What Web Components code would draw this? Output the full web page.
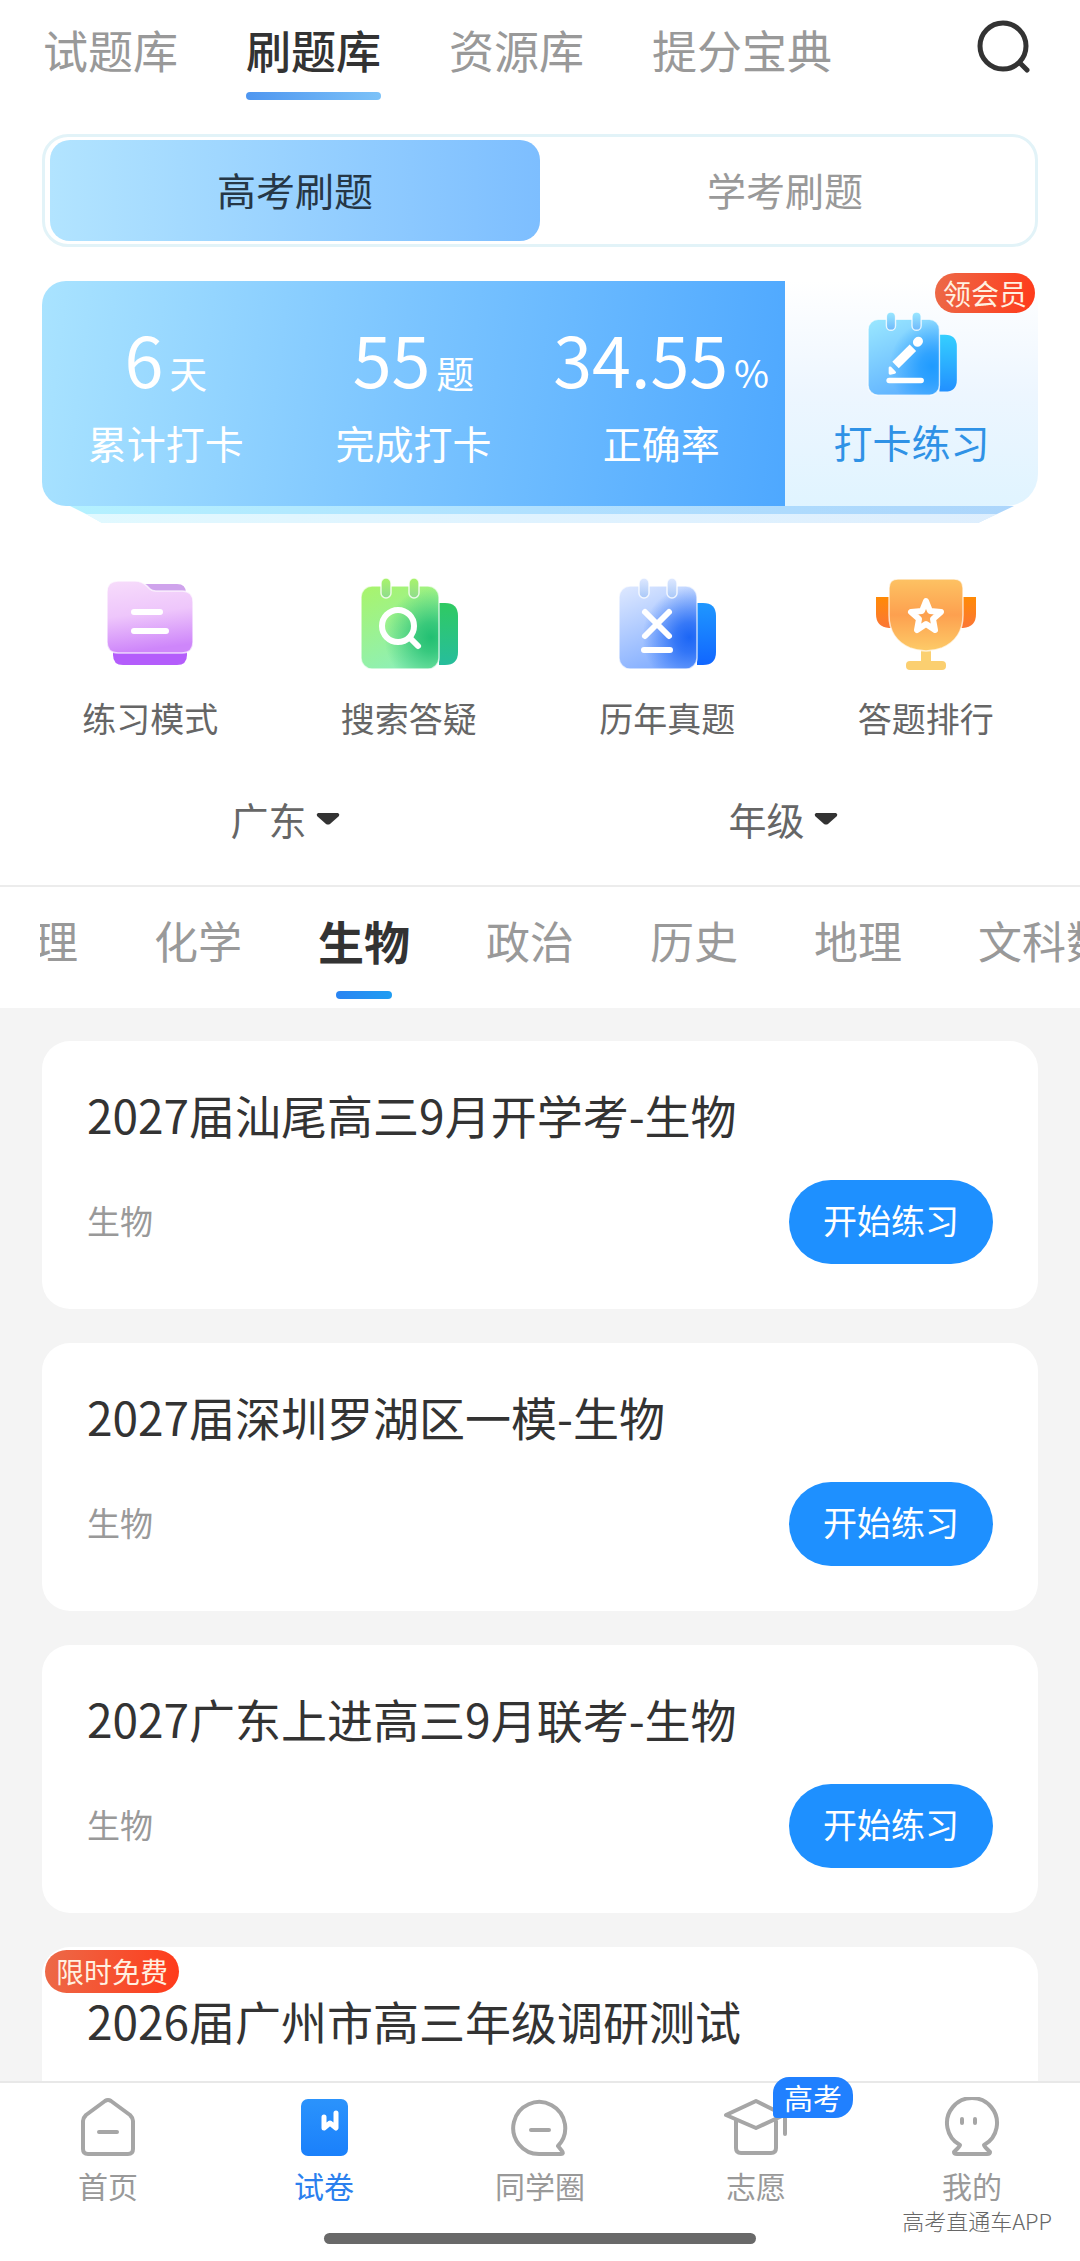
<!DOCTYPE html>
<html lang="zh-CN">
<head>
<meta charset="UTF-8">
<meta name="viewport" content="width=device-width, initial-scale=1.0">
<title>刷题库</title>
<style>
    body {
        margin: 0;
        font-family: "Noto Sans CJK SC", sans-serif;
        color: #333333;
        background-color: #ffffff;
    }
</style>
</head>
<body>
<practice-app></practice-app>

<script>
// Shared base: puts the markup of the element in an open shadow root
class BaseElement extends HTMLElement {
    constructor() {
        super();
        this.attachShadow({ mode: 'open' });
    }

    connectedCallback() {
        this.shadowRoot.innerHTML = `
        <style>
            * { box-sizing: border-box; }
            button, select {
                font-family: inherit;
                border: none;
                background: none;
                padding: 0;
                margin: 0;
                cursor: pointer;
            }
            a { color: inherit; text-decoration: none; }
            svg { display: block; }
        </style>
        ${this.render()}`;
    }
}

// Notepad shape used by several icons, the mark is drawn on top of it
function notepad(front, shade, side, ring, mark) {
    return `
    <svg viewBox="0 0 100 94" fill="none">
        <defs>
            <linearGradient id="front" x1="0" y1="0" x2="0.4" y2="1">
                <stop offset="0" stop-color="${front[0]}"/><stop offset="1" stop-color="${front[1]}"/>
            </linearGradient>
            <radialGradient id="shade" cx="0.9" cy="0.62" r="0.6">
                <stop offset="0" stop-color="${shade}"/><stop offset="0.3" stop-color="${shade}" stop-opacity="0.8"/>
                <stop offset="1" stop-color="${shade}" stop-opacity="0"/>
            </radialGradient>
            <linearGradient id="side" x1="0" y1="0" x2="0" y2="1">
                <stop offset="0" stop-color="${side[0]}"/><stop offset="1" stop-color="${side[1]}"/>
            </linearGradient>
            <linearGradient id="ring" x1="0" y1="0" x2="0" y2="1">
                <stop offset="0" stop-color="${front[0]}"/><stop offset="1" stop-color="${ring}"/>
            </linearGradient>
        </defs>
        <path d="M80 25h6q13 0 13 13v36q0 13-13 13h-6z" fill="url(#side)"/>
        <rect x="2" y="8" width="78" height="83" rx="11" fill="url(#front)"/>
        <rect x="2" y="8" width="78" height="83" rx="11" fill="url(#shade)" stroke="#ffffff" stroke-opacity="0.7" stroke-width="1.5"/>
        <rect x="22" y="0" width="10" height="20" rx="5" fill="url(#ring)" stroke="#ffffff" stroke-opacity="0.8" stroke-width="1.5"/>
        <rect x="50" y="0" width="10" height="20" rx="5" fill="url(#ring)" stroke="#ffffff" stroke-opacity="0.8" stroke-width="1.5"/>
        <g stroke="#ffffff" stroke-width="6" stroke-linecap="round">${mark}</g>
    </svg>`;
}

const icons = {
    search: `
    <svg viewBox="0 0 54 54" fill="none" stroke="#333333" stroke-width="5" stroke-linecap="round">
        <circle cx="27" cy="26" r="23"/><path d="M44 43l7 7"/>
    </svg>`,
    write: notepad(['#9be8ff', '#62b4ff'], '#1f9bff', ['#35cfff', '#2290ff'], '#6fb9fb', `
        <path d="M25 75h35"/>
        <path d="M32 58L51 39" stroke-width="10" stroke-linecap="butt"/>
        <path d="M26 67v-6l5 5z" stroke-width="3" stroke-linejoin="round" fill="#ffffff"/>
        <path d="M56 33l1-1" stroke-width="10"/>`),
    find: notepad(['#a9f46a', '#8ff0b4'], '#22bf72', ['#2fca62', '#27bd9c'], '#8fdc8e', `
        <circle cx="39" cy="48" r="16"/><path d="M52 61l7 7"/>`),
    past: notepad(['#dfe9ff', '#86b0ff'], '#1c66f5', ['#1f97ff', '#1166ff'], '#a9c8f8', `
        <path d="M28 34l24 24M52 34L28 58M27 72h26"/>`),
    folder: `
    <svg viewBox="0 0 100 94" fill="none">
        <defs>
            <linearGradient id="paper" x1="0" y1="0" x2="0.15" y2="1">
                <stop offset="0" stop-color="#f7dcfb"/><stop offset="0.5" stop-color="#eec6fb"/><stop offset="1" stop-color="#ce86fa"/>
            </linearGradient>
        </defs>
        <path d="M42 6h35q9 0 9 9H42z" fill="#cfa3ec"/>
        <path d="M13 74h74v3q0 10-10 10H23q-10 0-10-10z" fill="#b45dfb"/>
        <path d="M18 3h17q7 0 12 5l3 3q2 2 6 2h26q11 0 11 11v40q0 11-11 11H18Q7 75 7 64V14Q7 3 18 3z" fill="url(#paper)" stroke="#ffffff" stroke-opacity="0.7" stroke-width="1.5"/>
        <path d="M34 34h26M34 53h32" stroke="#ffffff" stroke-width="6" stroke-linecap="round"/>
    </svg>`,
    trophy: `
    <svg viewBox="0 0 100 94" fill="none">
        <defs>
            <linearGradient id="cup" x1="0" y1="0" x2="0" y2="1">
                <stop offset="0" stop-color="#fdc263"/><stop offset="0.5" stop-color="#fda04f"/><stop offset="1" stop-color="#fdcb68"/>
            </linearGradient>
            <linearGradient id="ear" x1="0" y1="0" x2="0" y2="1">
                <stop offset="0" stop-color="#ff8a05"/><stop offset="1" stop-color="#fb7637"/>
            </linearGradient>
        </defs>
        <path d="M0 19h16v31h-3Q0 49 0 36z" fill="url(#ear)"/>
        <path d="M100 19H84v31h3q13-1 13-14z" fill="url(#ear)"/>
        <path d="M45 70h10v14H45z" fill="#fbd070"/>
        <rect x="30" y="83" width="40" height="9" rx="4" fill="#fbcf70"/>
        <path d="M22 1h56q9 0 9 9v27q0 24-21 33-8 3-16 3t-16-3Q13 61 13 37V10q0-9 9-9z" fill="url(#cup)" stroke="#ffffff" stroke-opacity="0.7" stroke-width="1.5"/>
        <path d="M50 23l4 10 11 1-8 7 2 11-9-6-9 6 2-11-8-7 11-1z" stroke="#ffffff" stroke-width="6" stroke-linejoin="round"/>
    </svg>`,
    arrow: `
    <svg viewBox="0 0 24 12"><path d="M2 0h20q2 1 1 3l-9 8q-2 1-4 0L1 3Q0 1 2 0z" fill="#333333"/></svg>`,
    home: `
    <svg viewBox="0 0 60 60" fill="none" stroke="#a6a6a6" stroke-width="4" stroke-linecap="round" stroke-linejoin="round">
        <path d="M27 4q3-2 6 0l19 14q3 3 3 6v28q0 5-5 5H10q-5 0-5-5V24q0-3 3-6zM21 35h18"/>
    </svg>`,
    paper: `
    <svg viewBox="0 0 60 60" fill="none">
        <defs>
            <linearGradient id="book" x1="0" y1="0" x2="0" y2="1">
                <stop offset="0" stop-color="#2b93fc"/><stop offset="1" stop-color="#1a80fb"/>
            </linearGradient>
        </defs>
        <rect x="7" y="2" width="47" height="57" rx="7" fill="url(#book)"/>
        <path d="M30 20v11l6-5 6 5V16" stroke="#ffffff" stroke-width="5" stroke-linecap="round" stroke-linejoin="round"/>
    </svg>`,
    circle: `
    <svg viewBox="0 0 60 60" fill="none" stroke="#a6a6a6" stroke-width="4" stroke-linecap="round" stroke-linejoin="round">
        <path d="M30 57h21q3 0 1-3l-4-5a26 26 0 1 0-18 8zM21 33h18"/>
    </svg>`,
    cap: `
    <svg viewBox="0 0 66 60" fill="none" stroke="#a6a6a6" stroke-width="4" stroke-linecap="round" stroke-linejoin="round">
        <path d="M3 18L33 4l28 14-28 13zM13 24v27q0 5 5 5h30q5 0 5-5V24M62 19v18"/>
    </svg>`,
    me: `
    <svg viewBox="0 0 60 60" fill="none" stroke="#a6a6a6" stroke-width="4" stroke-linecap="round" stroke-linejoin="round">
        <path d="M18 48a25 25 0 1 1 24 0q0 1 3 4l3 3q0 2-3 2H15q-3 0-3-2l3-3q3-3 3-4zM20 22v4M33 22v4"/>
    </svg>`
};

class AppIcon extends BaseElement {
    render() {
        return `
        <style>
            :host { display: block; flex: none; }
            svg { width: 100%; height: 100%; }
        </style>
        ${icons[this.getAttribute('name')]}`;
    }
}

class TopTabs extends BaseElement {
    render() {
        return `
        <style>
            :host {
                display: flex;
                justify-content: space-between;
                align-items: flex-start;
                padding: 20px 50px 0 43px;
            }
            nav { display: flex; gap: 68px; }
            a {
                font-size: 45px;
                line-height: 60px;
                color: #999999;
            }
            a::after {
                content: "";
                display: block;
                height: 8px;
                margin-top: 12px;
                border-radius: 4px;
            }
            a.active { color: #333333; font-weight: 500; }
            a.active::after { background: linear-gradient(90deg, #4e96f0, #7cc2f8); }
            app-icon { width: 54px; height: 54px; }
        </style>
        <nav>
            <a href="#papers">试题库</a>
            <a href="#practice" class="active">刷题库</a>
            <a href="#resources">资源库</a>
            <a href="#tips">提分宝典</a>
        </nav>
        <button aria-label="搜索"><app-icon name="search"></app-icon></button>`;
    }
}

class ModeSwitch extends BaseElement {
    render() {
        return `
        <style>
            :host {
                display: grid;
                grid-template-columns: 1fr 1fr;
                padding: 3px 5px;
                border: 3px solid #e2f3f8;
                border-radius: 26px;
            }
            button {
                height: 101px;
                padding-bottom: 4px;
                font-size: 39px;
                line-height: 50px;
                color: #999999;
                border-radius: 20px;
            }
            button.active {
                color: #263746;
                background: linear-gradient(90deg, #b2e4ff, #7dbeff);
            }
        </style>
        <button class="active">高考刷题</button>
        <button>学考刷题</button>`;
    }

    connectedCallback() {
        super.connectedCallback();
        const buttons = this.shadowRoot.querySelectorAll('button');
        buttons.forEach(button => {
            button.addEventListener('click', () => {
                buttons.forEach(b => b.classList.toggle('active', b === button));
            });
        });
    }
}

class StatItem extends BaseElement {
    render() {
        return `
        <style>
            :host {
                display: flex;
                flex-direction: column;
                align-items: center;
                color: #ffffff;
            }
            .value {
                display: flex;
                align-items: baseline;
                gap: 6px;
                font-size: 70px;
                line-height: 90px;
            }
            .unit { font-size: 38px; line-height: 50px; }
            .label { font-size: 39px; line-height: 50px; margin-top: 14px; }
        </style>
        <div class="value"><slot></slot><span class="unit">${this.getAttribute('unit')}</span></div>
        <div class="label">${this.getAttribute('label')}</div>`;
    }
}

class TagBadge extends BaseElement {
    render() {
        return `
        <style>
            :host {
                display: block;
                padding: 0 8px;
                font-size: 28px;
                line-height: 40px;
                color: #fff0e0;
                background: linear-gradient(100deg, #ec6a48, #ff3a1a);
                border-radius: 22px;
            }
            :host([large]) { padding: 0 11px; line-height: 43px; }
        </style>
        <slot></slot>`;
    }
}

class CheckInPanel extends BaseElement {
    render() {
        return `
        <style>
            :host { display: block; }
            .panel { display: grid; grid-template-columns: 743fr 253fr; height: 225px; }
            .stats {
                display: grid;
                grid-template-columns: repeat(3, 1fr);
                padding-top: 32px;
                background: linear-gradient(97deg, #a9e3ff, #7cc5ff 48%, #4ea8ff);
                border-radius: 24px 0 0 24px;
            }
            .start {
                position: relative;
                display: flex;
                flex-direction: column;
                align-items: center;
                padding-top: 31px;
                font-size: 39px;
                line-height: 50px;
                color: #2f92e6;
                background: linear-gradient(#ffffff, #edf6ff 50%, #e0f4ff);
                border-radius: 0 24px 32px 0;
            }
            .start app-icon { width: 92px; height: 86px; margin-bottom: 18px; }
            tag-badge { position: absolute; top: -8px; right: 3px; }
            .layers {
                height: 17px;
                background:
                    linear-gradient(transparent 8px, rgba(255, 255, 255, 0.6) 8px),
                    linear-gradient(90deg, #b4f2ff, #b0e0ff 50%, #acd5fb);
                clip-path: polygon(28px 0, calc(100% - 24px) 0, calc(100% - 60px) 100%, 60px 100%, 44px 8px);
            }
        </style>
        <div class="panel">
            <div class="stats">
                <stat-item unit="天" label="累计打卡">6</stat-item>
                <stat-item unit="题" label="完成打卡">55</stat-item>
                <stat-item unit="%" label="正确率">34.55</stat-item>
            </div>
            <a class="start" href="#check-in">
                <app-icon name="write"></app-icon>
                打卡练习
                <tag-badge>领会员</tag-badge>
            </a>
        </div>
        <div class="layers"></div>`;
    }
}

class QuickEntry extends BaseElement {
    render() {
        return `
        <style>
            :host { display: block; }
            a {
                display: flex;
                flex-direction: column;
                align-items: center;
                gap: 26px;
                font-size: 34px;
                line-height: 40px;
                color: #666666;
            }
            app-icon { width: 100px; height: 94px; }
        </style>
        <a href="#${this.getAttribute('icon')}">
            <app-icon name="${this.getAttribute('icon')}"></app-icon>
            <slot></slot>
        </a>`;
    }
}

class FilterSelect extends BaseElement {
    render() {
        return `
        <style>
            :host { display: flex; justify-content: center; }
            label { display: flex; align-items: center; gap: 8px; padding-right: 12px; }
            select {
                appearance: none;
                height: 50px;
                font-size: 38px;
                line-height: 50px;
                color: #666666;
            }
            app-icon { width: 24px; height: 12px; }
        </style>
        <label>
            <select aria-label="${this.getAttribute('label')}"><option>${this.getAttribute('value')}</option></select>
            <app-icon name="arrow"></app-icon>
        </label>`;
    }
}

class SubjectTabs extends BaseElement {
    render() {
        const subjects = ['物理', '化学', '生物', '政治', '历史', '地理', '文科数学'];
        return `
        <style>
            :host {
                display: block;
                padding-left: 40px;
                border-top: 2px solid #ececec;
            }
            nav {
                display: flex;
                gap: 76px;
                padding: 23px 0 9px;
                overflow: hidden;
            }
            a {
                flex: none;
                font-size: 44px;
                line-height: 60px;
                color: #999999;
                padding-bottom: 29px;
            }
            a.active {
                font-size: 46px;
                font-weight: bold;
                color: #333333;
                position: relative;
            }
            a.active::after {
                content: "";
                position: absolute;
                left: 18px;
                right: 18px;
                bottom: 0;
                height: 8px;
                border-radius: 4px;
                background: linear-gradient(90deg, #2a84f2, #1f9df2);
            }
        </style>
        <nav>
            ${subjects.map(name => `<a href="#${name}"${name === '生物' ? ' class="active"' : ''}>${name}</a>`).join('')}
        </nav>`;
    }

    connectedCallback() {
        super.connectedCallback();
        this.shadowRoot.querySelector('nav').scrollLeft = 50;
    }
}

class PaperCard extends BaseElement {
    render() {
        const tag = this.getAttribute('tag');
        const subject = this.getAttribute('subject');
        return `
        <style>
            :host {
                display: block;
                position: relative;
                padding: 43px 45px 45px;
                background-color: #ffffff;
                border-radius: 28px;
            }
            h2 { margin: 0 0 36px; font-size: 46px; line-height: 60px; font-weight: normal; }
            .row { display: flex; justify-content: space-between; align-items: center; }
            .subject { padding-bottom: 4px; font-size: 33px; line-height: 40px; color: #999999; }
            button {
                height: 84px;
                padding: 0 34px 4px;
                font-size: 34px;
                line-height: 40px;
                color: #ffffff;
                background-color: #1e90ff;
                border-radius: 42px;
            }
            tag-badge { position: absolute; top: 3px; left: 3px; }
        </style>
        ${tag ? `<tag-badge large>${tag}</tag-badge>` : ''}
        <h2><slot></slot></h2>
        ${subject ? `
        <div class="row">
            <span class="subject">${subject}</span>
            <button>开始练习</button>
        </div>` : ''}`;
    }
}

class NavItem extends BaseElement {
    render() {
        const badge = this.getAttribute('badge');
        return `
        <style>
            :host { display: block; color: #999999; }
            :host([active]) { color: #2b80ee; }
            a {
                position: relative;
                display: flex;
                flex-direction: column;
                align-items: center;
                gap: 8px;
                font-size: 30px;
                line-height: 40px;
            }
            app-icon { width: 60px; height: 60px; }
            app-icon[name="cap"] { width: 66px; }
            .badge {
                position: absolute;
                top: -20px;
                left: calc(50% + 17px);
                padding: 0 11px;
                font-size: 29px;
                line-height: 41px;
                color: #ffffff;
                background-color: #2080ff;
                border-radius: 16px 18px 18px 4px;
            }
        </style>
        <a href="#${this.getAttribute('icon')}">
            <app-icon name="${this.getAttribute('icon')}"></app-icon>
            <slot></slot>
            ${badge ? `<span class="badge">${badge}</span>` : ''}
        </a>`;
    }
}

class BottomNav extends BaseElement {
    render() {
        return `
        <style>
            :host {
                display: block;
                position: relative;
                background-color: #ffffff;
                border-top: 2px solid #e8e8e8;
                padding-bottom: 17px;
            }
            nav {
                display: grid;
                grid-template-columns: repeat(5, 1fr);
                padding: 14px 0 28px;
            }
            .handle {
                width: 40%;
                height: 11px;
                margin: 0 auto;
                background-color: #696969;
                border-radius: 6px;
            }
            .mark {
                position: absolute;
                right: 28px;
                bottom: 26px;
                font-size: 22px;
                line-height: 30px;
                font-weight: 300;
                color: #666666;
            }
        </style>
        <nav>
            <nav-item icon="home">首页</nav-item>
            <nav-item icon="paper" active>试卷</nav-item>
            <nav-item icon="circle">同学圈</nav-item>
            <nav-item icon="cap" badge="高考">志愿</nav-item>
            <nav-item icon="me">我的</nav-item>
        </nav>
        <div class="handle"></div>
        <span class="mark">高考直通车APP</span>`;
    }
}

class PracticeApp extends BaseElement {
    render() {
        return `
        <style>
            :host { display: flex; flex-direction: column; height: 100vh; }
            .top { padding: 34px 42px 41px; }
            check-in-panel { margin-top: 34px; }
            .entries {
                display: grid;
                grid-template-columns: repeat(4, 1fr);
                margin: 55px -17px 56px -21px;
            }
            .filters { display: grid; grid-template-columns: 1fr 1fr; }
            main {
                flex: 1;
                min-height: 0;
                overflow: hidden;
                display: flex;
                flex-direction: column;
                gap: 34px;
                padding: 33px 42px 0;
                background-color: #f4f4f4;
            }
            paper-card { flex: none; }
        </style>
        <top-tabs></top-tabs>
        <div class="top">
            <mode-switch></mode-switch>
            <check-in-panel></check-in-panel>
            <div class="entries">
                <quick-entry icon="folder">练习模式</quick-entry>
                <quick-entry icon="find">搜索答疑</quick-entry>
                <quick-entry icon="past">历年真题</quick-entry>
                <quick-entry icon="trophy">答题排行</quick-entry>
            </div>
            <div class="filters">
                <filter-select label="地区" value="广东"></filter-select>
                <filter-select label="年级" value="年级"></filter-select>
            </div>
        </div>
        <subject-tabs></subject-tabs>
        <main>
            <paper-card subject="生物">2027届汕尾高三9月开学考-生物</paper-card>
            <paper-card subject="生物">2027届深圳罗湖区一模-生物</paper-card>
            <paper-card subject="生物">2027广东上进高三9月联考-生物</paper-card>
            <paper-card tag="限时免费">2026届广州市高三年级调研测试</paper-card>
        </main>
        <bottom-nav></bottom-nav>`;
    }
}

// Define the custom elements
customElements.define('app-icon', AppIcon);
customElements.define('top-tabs', TopTabs);
customElements.define('mode-switch', ModeSwitch);
customElements.define('stat-item', StatItem);
customElements.define('tag-badge', TagBadge);
customElements.define('check-in-panel', CheckInPanel);
customElements.define('quick-entry', QuickEntry);
customElements.define('filter-select', FilterSelect);
customElements.define('subject-tabs', SubjectTabs);
customElements.define('paper-card', PaperCard);
customElements.define('nav-item', NavItem);
customElements.define('bottom-nav', BottomNav);
customElements.define('practice-app', PracticeApp);
</script>
</body>
</html>
